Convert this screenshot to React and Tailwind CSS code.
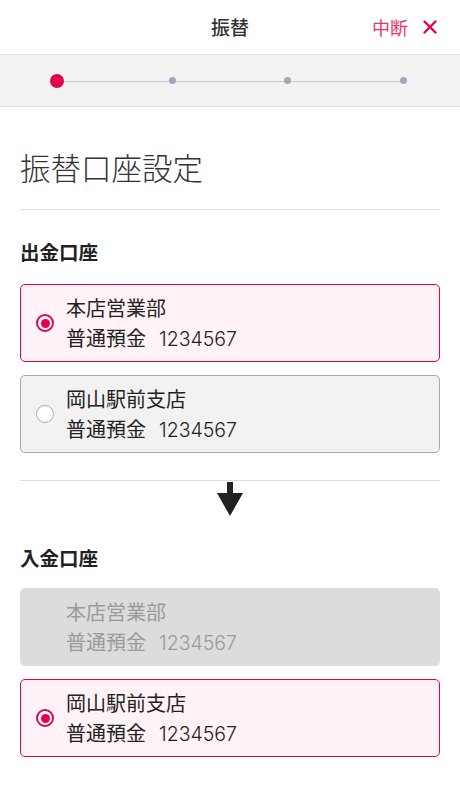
import { X } from "lucide-react";

const font = {
  fontFamily: '"Noto Sans CJK JP", "Noto Sans", sans-serif',
};

function Radio({ checked }) {
  if (checked) {
    return (
      <span className="flex h-[18px] w-[18px] shrink-0 items-center justify-center rounded-full border-2 border-[#e5004f] bg-white">
        <span className="h-[9px] w-[9px] rounded-full bg-[#e5004f]" />
      </span>
    );
  }
  return (
    <span className="h-[18px] w-[18px] shrink-0 rounded-full border-[1.5px] border-[#a6abc0] bg-white" />
  );
}

function AccountCard({ branch, number, state }) {
  // state: "selected" | "idle" | "disabled"
  const box =
    state === "selected"
      ? "border border-[#e5004f] bg-[#fff3f7] text-[#222]"
      : state === "idle"
      ? "border border-[#a3a7b6] bg-[#f2f2f3] text-[#222]"
      : "border border-transparent bg-[#dcdcdc] text-[#9a9a9a]";

  return (
    <div className={`flex h-[78px] items-center gap-[12px] rounded-[5px] pl-[15px] ${box}`}>
      {state === "disabled" ? (
        <span className="h-[18px] w-[18px] shrink-0" />
      ) : (
        <Radio checked={state === "selected"} />
      )}
      <div className="text-[20px] leading-[30px]">
        <div>{branch}</div>
        <div>
          普通預金
          <span className="ml-[13px] font-[Inter] text-[19.5px] font-light">{number}</span>
        </div>
      </div>
    </div>
  );
}

function Steps() {
  return (
    <div className="border-y border-[#e2e2e4] bg-[#f2f2f3]">
      <div className="relative mx-auto flex h-[51px] w-[347px] items-center justify-between">
        <div className="absolute inset-x-0 top-1/2 h-px bg-[#c9c9d0]" />
        {[0, 1, 2, 3].map((i) => (
          <div key={i} className="relative flex w-0 justify-center">
            {i === 0 ? (
              <span className="h-[14px] w-[14px] shrink-0 rounded-full bg-[#e5004f]" />
            ) : (
              <span className="h-[7px] w-[7px] shrink-0 rounded-full bg-[#a0a6bb]" />
            )}
          </div>
        ))}
      </div>
    </div>
  );
}

export default function App() {
  return (
    <div className="min-h-[804px] w-[460px] bg-white text-[#222]" style={font}>
      {/* header */}
      <div className="relative flex h-[54px] items-center justify-center">
        <span className="text-[19px] font-medium text-[#333]">振替</span>
        <div className="absolute right-[19px] top-0 flex h-full items-center gap-[11px] text-[#e5004f]">
          <span className="text-[18px] text-[#e8336f]">中断</span>
          <X size={22} strokeWidth={2.6} />
        </div>
      </div>

      <Steps />

      <div className="px-5">
        <h1 className="mt-[40px] text-[30.5px] font-light leading-[40px] text-[#333]">
          振替口座設定
        </h1>
        <div className="mt-[22px] h-px bg-[#dedede]" />

        <div className="mt-[28px] text-[19.5px] font-bold leading-[28px]">出金口座</div>
        <div className="mt-[18px] flex flex-col gap-[13px]">
          <AccountCard branch="本店営業部" number="1234567" state="selected" />
          <AccountCard branch="岡山駅前支店" number="1234567" state="idle" />
        </div>

        <div className="mt-[27px] h-px bg-[#dedede]" />
        <div className="mt-px flex justify-center">
          <svg width="26" height="34" viewBox="0 0 26 34">
            <rect x="10" y="0" width="6" height="12" fill="#222" />
            <polygon points="0,11 26,11 13,34" fill="#222" />
          </svg>
        </div>

        <div className="mt-[28px] text-[19.5px] font-bold leading-[28px]">入金口座</div>
        <div className="mt-[16px] flex flex-col gap-[13px]">
          <AccountCard branch="本店営業部" number="1234567" state="disabled" />
          <AccountCard branch="岡山駅前支店" number="1234567" state="selected" />
        </div>
      </div>
    </div>
  );
}
